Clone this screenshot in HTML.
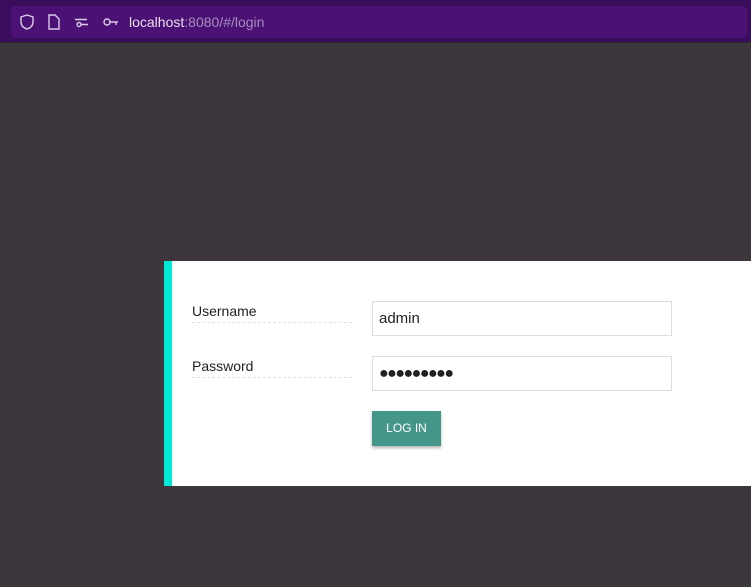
<!DOCTYPE html>
<html><head><style>
body{margin:0;width:751px;height:587px;background:#3d373d;font-family:"Liberation Sans",sans-serif;overflow:hidden;position:relative}
.top{position:absolute;left:0;top:0;width:751px;height:42px;background:#3a0c5c;border-bottom:1px solid #2a2a2a}
.bar{position:absolute;left:11px;top:6px;width:736px;height:32px;background:#4b1175;border-radius:4px}
.url{position:absolute;left:129px;top:14px;font-size:14px;color:#e8ddf0}
.url span{color:#a68cbd}
.card{position:absolute;left:164px;top:261px;width:587px;height:225px;background:#fff;border-left:8px solid #00e8d8;box-sizing:border-box}
.lbl{position:absolute;left:20px;font-size:14px;color:#222;width:160px;border-bottom:1px dashed #e2e2e2;padding-bottom:3px}
.inp{position:absolute;left:200px;border:1px solid #ddd;font-size:15px;color:#222;line-height:33px;padding-left:6px;box-sizing:border-box;width:300px;height:35px}
.btn{position:absolute;left:200px;top:150px;width:69px;height:35px;background:#44968b;color:#fff;font-size:12px;text-align:center;line-height:35px;box-shadow:0 2px 3px rgba(0,0,0,.3)}
</style></head><body>
<div class="top"><div class="bar"></div>
<svg style="position:absolute;left:18px;top:13px" width="100" height="18" fill="none" stroke="#d8cce4" stroke-width="1.4">
<path d="M9 2 L15 4 V9 C15 13 12 15 9 16 C6 15 3 13 3 9 V4 Z"/>
<path d="M31 2 H37 L41 6 V16 H31 Z"/>
<circle cx="61" cy="11.5" r="2"/><path d="M57 6.5 H69 M63 11.5 H70"/>
<circle cx="89" cy="9" r="3"/><path d="M92 9 H101 M98 9 V12"/>
</svg>
<div class="url">localhost<span>:8080/#/login</span></div></div>
<div class="card">
<div class="lbl" style="top:42px">Username</div>
<div class="lbl" style="top:97px">Password</div>
<div class="inp" style="top:40px">admin</div>
<div class="inp" style="top:95px;font-size:16px;letter-spacing:-1.5px;font-weight:bold">●●●●●●●●●</div>
<div class="btn">LOG IN</div>
</div>
</body></html>
